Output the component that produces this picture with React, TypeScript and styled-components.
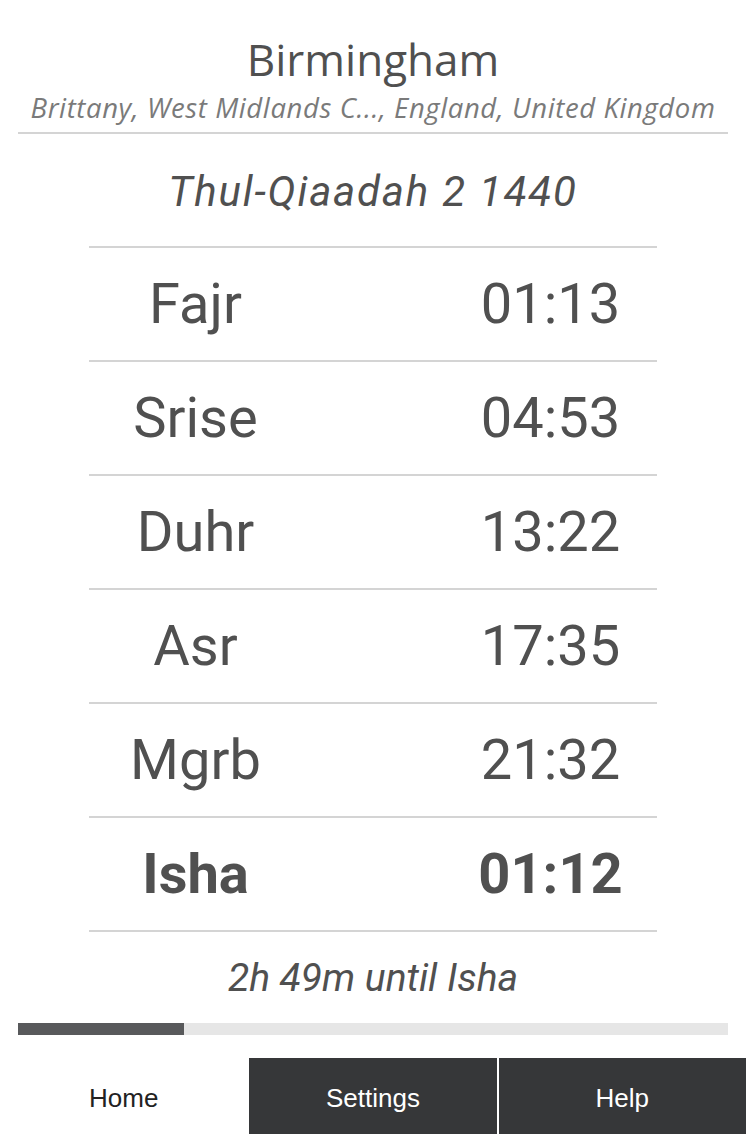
import { createGlobalStyle, styled } from "styled-components";

type Prayer = { name: string; time: string; current?: boolean };

const prayers: Prayer[] = [
  { name: "Fajr", time: "01:13" },
  { name: "Srise", time: "04:53" },
  { name: "Duhr", time: "13:22" },
  { name: "Asr", time: "17:35" },
  { name: "Mgrb", time: "21:32" },
  { name: "Isha", time: "01:12", current: true },
];

const tabs = ["Home", "Settings", "Help"];

const GlobalStyle = createGlobalStyle`
  html, body {
    margin: 0;
    padding: 0;
    background: #fff;
  }
  body {
    font-family: Roboto, "Liberation Sans", sans-serif;
    color: #555;
  }
`;

const App = () => {
  const progress = 23.4;
  return (
    <>
      <GlobalStyle />
      <StPage>
        <StHeader>
          <StCity>Birmingham</StCity>
          <StRegion>Brittany, West Midlands C..., England, United Kingdom</StRegion>
        </StHeader>
        <StHijri>Thul-Qiaadah 2 1440</StHijri>
        <StTable>
          {prayers.map(p => (
            <StRow key={p.name} $current={p.current}>
              <StCell>{p.name}</StCell>
              <span />
              <StCell>{p.time}</StCell>
            </StRow>
          ))}
        </StTable>
        <StCountdown>2h 49m until Isha</StCountdown>
        <StProgressTrack>
          <StProgressFill style={{ width: `${progress}%` }} />
        </StProgressTrack>
      </StPage>
      <StTabBar>
        {tabs.map((t, i) => (
          <StTab key={t} $active={i === 0}>
            {t}
          </StTab>
        ))}
      </StTabBar>
    </>
  );
};

export default App;

const StPage = styled.div`
  display: flex;
  flex-direction: column;
  align-items: center;
  padding: 31px 18px 0;
`;

const StHeader = styled.div`
  width: 100%;
  display: flex;
  flex-direction: column;
  align-items: center;
  border-bottom: 2px solid #d4d4d4;
  padding-bottom: 6px;
`;

const StCity = styled.h1`
  margin: 0;
  font-family: "Open Sans", "Noto Sans", sans-serif;
  font-weight: 400;
  font-size: 44px;
  line-height: 56px;
  color: #505050;
`;

const StRegion = styled.div`
  font-family: "Open Sans", "Noto Sans", sans-serif;
  font-style: italic;
  font-size: 27.5px;
  letter-spacing: 0.6px;
  line-height: 36px;
  padding-top: 3px;
  color: #7a7a7a;
  white-space: nowrap;
`;

const StHijri = styled.div`
  font-style: italic;
  font-size: 42px;
  letter-spacing: 1.8px;
  line-height: 48px;
  color: #505050;
  padding: 34px 0 30px;
`;

const StTable = styled.div`
  width: 568px;
  border-top: 2px solid #d4d4d4;
`;

const StRow = styled.div<{ $current?: boolean }>`
  display: grid;
  grid-template-columns: 3fr 2fr 3fr;
  align-items: center;
  height: 112px;
  border-bottom: 2px solid #d4d4d4;
  font-size: 56px;
  font-weight: ${p => (p.$current ? 700 : 400)};
  color: #505050;
`;

const StCell = styled.div`
  text-align: center;
`;

const StCountdown = styled.div`
  font-style: italic;
  font-size: 39px;
  line-height: 46px;
  color: #505050;
  padding: 23px 0 22px;
`;

const StProgressTrack = styled.div`
  width: 100%;
  height: 12px;
  background: #e6e6e6;
`;

const StProgressFill = styled.div`
  height: 100%;
  background: #58595b;
`;

const StTabBar = styled.nav`
  display: grid;
  grid-template-columns: 1fr 1fr 1fr;
  gap: 2px;
  margin-top: 23px;
  height: 76px;
`;

const StTab = styled.div<{ $active?: boolean }>`
  display: flex;
  align-items: center;
  justify-content: center;
  font-family: "Liberation Sans", Arial, sans-serif;
  font-size: 26px;
  padding-top: 4px;
  background: ${p => (p.$active ? "#fff" : "#363739")};
  color: ${p => (p.$active ? "#222" : "#fff")};
`;
